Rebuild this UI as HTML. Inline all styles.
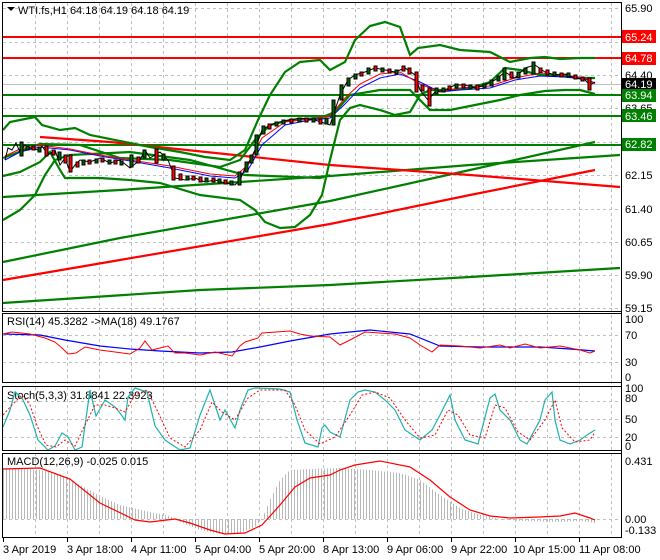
<!DOCTYPE html>
<html><head><meta charset="utf-8"><style>
html,body{margin:0;padding:0;background:#fff;}
svg{display:block;font-family:"Liberation Sans",sans-serif;}
</style></head><body>
<svg width="660" height="560" viewBox="0 0 660 560" xmlns="http://www.w3.org/2000/svg">
<defs>
<pattern id="hist" width="3" height="10" patternUnits="userSpaceOnUse"><rect x="0" y="0" width="1" height="10" fill="#b8b8b8"/></pattern>
</defs>
<rect width="660" height="560" fill="#fff"/>
<g stroke="#c0c0c0" stroke-dasharray="3,3" stroke-width="1">
<path d="M35.5 3V538M67.5 3V538M99.5 3V538M131.5 3V538M163.5 3V538M195.5 3V538M227.5 3V538M259.5 3V538M291.5 3V538M323.5 3V538M355.5 3V538M387.5 3V538M419.5 3V538M451.5 3V538M483.5 3V538M515.5 3V538M547.5 3V538M579.5 3V538M611.5 3V538"/>
<path d="M3 8.5H621M3 42.5H621M3 75.5H621M3 108.5H621M3 142.5H621M3 175.5H621M3 209.5H621M3 242.5H621M3 275.5H621M3 308.5H621"/>
<path d="M3 335.5H621M3 362.5H621M3 401.5H621M3 419.5H621M3 437.5H621M3 519.5H621"/>
</g>
<line x1="3" y1="84.5" x2="621" y2="84.5" stroke="#c0c0c0"/>
<g stroke-width="2" fill="none">
<path d="M3 37H621M3 58H621" stroke="#ff0000"/>
<path d="M3 95H621M3 116H621M3 145H621" stroke="#008000"/>
</g>
<g fill="none" stroke-width="2.2">
<polyline stroke="#008000" points="3,197 120,190 330,176 470,165 620,155"/>
<polyline stroke="#008000" points="3,262 120,238 330,201 470,170 595,142"/>
<polyline stroke="#008000" points="3,303 200,290 330,285 470,277 620,268"/>
<polyline stroke="#ff0000" points="3,280 120,260 330,224 470,195 595,170"/>
<polyline stroke="#ff0000" points="40,137 40,137 110,142 330,165 470,175 620,187"/>
<polyline stroke="#008000" points="3,220 20,210 35,195 45,175 55,160 70,155 130,152 190,160 245,175 320,178 330,175"/>
<polyline stroke="#008000" points="3,130 10,122 35,117 42,125 60,130 75,128 90,135 130,143 150,147 180,152 205,157 230,160 245,150 258,120 270,95 285,72 300,62 320,60 330,70 345,62 355,40 370,26 385,22 400,27 410,55 418,48 440,45 460,50 490,52 510,62 530,58 545,57 560,59 580,58 595,58"/>
<polyline stroke="#008000" points="3,176 20,172 40,162 50,152 60,170 65,178 100,178 130,180 160,183 200,195 240,200 255,210 265,222 280,228 295,227 310,215 322,195 330,160 340,120 350,108 360,105 380,110 395,115 410,112 420,95 430,90 450,90 470,88 490,82 505,68 520,70 540,75 560,76 580,78 595,78"/>
<polyline stroke="#008000" points="3,158 40,144 80,145 120,158 170,160 220,167 240,160 255,140 270,125 290,120 320,118 335,112 350,95 380,90 410,90 430,110 450,110 480,104 500,100 520,95 545,91 565,90 580,90 595,94"/>
</g>
<polyline fill="none" stroke="#0000ff" stroke-width="1" points="5,160 20,152 40,147 70,150 100,156 130,161 170,168 210,176 235,178 248,170 262,145 285,125 310,120 330,118 345,104 360,88 380,78 400,74 420,82 440,92 460,90 490,88 515,80 540,76 565,77 585,79 595,83"/>
<polyline fill="none" stroke="#ff0000" stroke-width="1" points="5,156 20,149 40,145 70,149 100,155 130,160 170,166 210,174 235,176 248,165 262,138 285,122 310,119 330,116 345,98 360,84 380,74 400,72 420,84 440,92 460,88 490,86 515,78 540,73 565,75 585,78 595,84"/>
<polyline fill="none" stroke="#000" stroke-width="1" points="5,160 8,148 12,150 16,143 20,152 25,145 30,148 38,150 42,146 48,155 55,150 60,165 65,158 70,172 75,165 80,160 90,162 100,158 110,163 120,160 130,168 140,160 145,150 150,158 160,152 168,160 175,178 185,180 195,178 205,182 215,180 225,183 235,185 240,180 245,168 250,160 255,150 262,130 270,125 280,122 290,120 300,118 315,120 330,125 335,110 340,95 348,80 355,75 365,72 375,68 385,70 395,72 405,68 415,75 420,90 428,100 435,92 445,90 455,85 465,85 475,88 485,85 495,80 505,72 515,78 525,68 535,65 545,72 555,75 565,74 575,78 585,80 590,85 595,82"/>
<g stroke="#000" stroke-width="1">
<rect x="20" y="142" width="3" height="14" fill="#006400"/><rect x="26" y="146" width="3" height="4" fill="#006400"/><rect x="32" y="146" width="3" height="4" fill="#ff0000"/><rect x="38" y="147" width="3" height="5" fill="#006400"/>
<rect x="45" y="146" width="3" height="10" fill="#ff0000"/><rect x="52" y="150" width="3" height="5" fill="#ff0000"/><rect x="58" y="152" width="3" height="8" fill="#006400"/><rect x="64" y="155" width="3" height="8" fill="#ff0000"/>
<rect x="69" y="155" width="3" height="17" fill="#ff0000"/><rect x="76" y="162" width="3" height="5" fill="#ff0000"/><rect x="82" y="160" width="3" height="5" fill="#006400"/><rect x="88" y="160" width="3" height="4" fill="#ff0000"/>
<rect x="95" y="159" width="3" height="4" fill="#006400"/><rect x="101" y="158" width="3" height="4" fill="#ff0000"/><rect x="108" y="160" width="3" height="4" fill="#006400"/><rect x="114" y="160" width="3" height="4" fill="#ff0000"/>
<rect x="120" y="161" width="3" height="4" fill="#006400"/><rect x="130" y="155" width="3" height="12" fill="#006400"/><rect x="137" y="157" width="3" height="6" fill="#ff0000"/><rect x="143" y="150" width="3" height="8" fill="#006400"/>
<rect x="155" y="149" width="3" height="14" fill="#ff0000"/><rect x="162" y="154" width="3" height="6" fill="#006400"/><rect x="172" y="166" width="3" height="14" fill="#ff0000"/><rect x="179" y="174" width="3" height="6" fill="#ff0000"/>
<rect x="186" y="176" width="3" height="4" fill="#006400"/><rect x="192" y="176" width="3" height="4" fill="#ff0000"/><rect x="199" y="177" width="3" height="5" fill="#ff0000"/><rect x="205" y="178" width="3" height="4" fill="#006400"/>
<rect x="212" y="178" width="3" height="4" fill="#ff0000"/><rect x="218" y="179" width="3" height="4" fill="#006400"/><rect x="224" y="180" width="3" height="4" fill="#ff0000"/><rect x="230" y="181" width="3" height="4" fill="#006400"/>
<rect x="238" y="172" width="3" height="13" fill="#006400"/><rect x="245" y="162" width="3" height="10" fill="#006400"/><rect x="250" y="155" width="3" height="8" fill="#006400"/><rect x="255" y="135" width="3" height="20" fill="#006400"/>
<rect x="262" y="126" width="3" height="8" fill="#006400"/><rect x="268" y="124" width="3" height="5" fill="#ff0000"/><rect x="275" y="122" width="3" height="4" fill="#006400"/><rect x="282" y="120" width="3" height="4" fill="#006400"/>
<rect x="290" y="119" width="3" height="4" fill="#ff0000"/><rect x="298" y="118" width="3" height="4" fill="#006400"/><rect x="305" y="118" width="3" height="4" fill="#ff0000"/><rect x="312" y="118" width="3" height="4" fill="#006400"/>
<rect x="319" y="119" width="3" height="5" fill="#ff0000"/><rect x="325" y="118" width="3" height="6" fill="#006400"/>
<rect x="332" y="100" width="3" height="25" fill="#006400"/><rect x="340" y="85" width="3" height="15" fill="#006400"/><rect x="347" y="78" width="3" height="8" fill="#006400"/><rect x="354" y="74" width="3" height="5" fill="#006400"/>
<rect x="360" y="72" width="3" height="4" fill="#ff0000"/><rect x="367" y="68" width="3" height="6" fill="#006400"/><rect x="374" y="66" width="3" height="5" fill="#ff0000"/><rect x="381" y="68" width="3" height="4" fill="#006400"/>
<rect x="388" y="69" width="3" height="4" fill="#ff0000"/><rect x="395" y="70" width="3" height="4" fill="#006400"/><rect x="402" y="66" width="3" height="5" fill="#ff0000"/><rect x="408" y="68" width="3" height="6" fill="#ff0000"/>
<rect x="415" y="72" width="3" height="20" fill="#ff0000"/><rect x="421" y="85" width="3" height="6" fill="#ff0000"/><rect x="428" y="88" width="3" height="18" fill="#ff0000"/><rect x="435" y="88" width="3" height="6" fill="#006400"/>
<rect x="442" y="88" width="3" height="4" fill="#006400"/><rect x="448" y="86" width="3" height="4" fill="#ff0000"/><rect x="455" y="84" width="3" height="4" fill="#006400"/><rect x="462" y="84" width="3" height="4" fill="#ff0000"/>
<rect x="469" y="85" width="3" height="4" fill="#006400"/><rect x="476" y="85" width="3" height="5" fill="#ff0000"/><rect x="483" y="84" width="3" height="4" fill="#006400"/><rect x="490" y="80" width="3" height="6" fill="#006400"/>
<rect x="497" y="76" width="3" height="5" fill="#006400"/><rect x="503" y="68" width="3" height="12" fill="#006400"/><rect x="510" y="72" width="3" height="6" fill="#ff0000"/><rect x="517" y="72" width="3" height="6" fill="#006400"/>
<rect x="524" y="68" width="3" height="6" fill="#006400"/><rect x="532" y="62" width="3" height="12" fill="#006400"/><rect x="539" y="68" width="3" height="5" fill="#ff0000"/><rect x="546" y="70" width="3" height="5" fill="#ff0000"/>
<rect x="553" y="72" width="3" height="4" fill="#006400"/><rect x="560" y="73" width="3" height="4" fill="#ff0000"/><rect x="567" y="73" width="3" height="4" fill="#006400"/><rect x="574" y="75" width="3" height="4" fill="#ff0000"/>
<rect x="581" y="77" width="3" height="4" fill="#ff0000"/><rect x="588" y="78" width="3" height="12" fill="#ff0000"/>
</g>
<g font-size="11" fill="#000">
<text x="625" y="12">65.90</text><text x="625" y="79">64.40</text><text x="625" y="112">63.65</text>
<text x="625" y="179">62.15</text><text x="625" y="213">61.40</text><text x="625" y="246">60.65</text>
<text x="625" y="279">59.90</text><text x="625" y="312">59.15</text>
</g>
<rect x="622" y="30" width="34" height="13" fill="#ff0000"/><text x="625" y="41" font-size="11" fill="#fff">65.24</text>
<rect x="622" y="52" width="34" height="13" fill="#ff0000"/><text x="625" y="62" font-size="11" fill="#fff">64.78</text>
<rect x="622" y="78" width="34" height="12" fill="#000"/><text x="625" y="88" font-size="11" fill="#fff">64.19</text>
<rect x="622" y="89" width="34" height="13" fill="#008000"/><text x="625" y="99" font-size="11" fill="#fff">63.94</text>
<rect x="622" y="109" width="34" height="13" fill="#008000"/><text x="625" y="120" font-size="11" fill="#fff">63.46</text>
<rect x="622" y="138" width="34" height="13" fill="#008000"/><text x="625" y="148" font-size="11" fill="#fff">62.82</text>
<path d="M7 7h8l-4 4z" fill="#000"/>
<text x="18" y="14" font-size="11" fill="#000">WTI.fs,H1  64.18 64.19 64.18 64.19</text>
<text x="7" y="325" font-size="11">RSI(14) 45.3282  -&gt;MA(18) 49.1767</text>
<polyline fill="none" stroke="#0000ff" stroke-width="1.2" points="3,334 40,335 65,340 100,346 130,349 160,351 200,353 232,352 260,347 290,341 330,334 370,330 410,334 440,346 480,347 540,347 570,349 595,351"/>
<polyline fill="none" stroke="#ff0000" stroke-width="1" points="3,334 12,332 30,334 45,338 55,342 62,348 68,354 76,353 85,347 100,350 115,352 130,354 140,348 145,341 152,350 160,348 168,346 175,353 185,353 200,355 215,352 232,356 240,346 245,342 258,338 262,333 290,331 300,334 310,336 330,337 340,345 350,340 365,332 380,333 395,334 410,338 420,345 432,352 440,345 460,346 480,348 500,345 510,348 525,344 540,348 560,346 580,350 590,353 595,351"/>
<text x="7" y="399" font-size="11">Stoch(5,3,3) 31.8841 22.3923</text>
<polyline fill="none" stroke="#20b2aa" stroke-width="1.2" points="3,427 10,410 15,392 22,398 30,415 38,440 48,450 55,446 62,433 68,437 75,450 82,447 90,390 96,416 105,400 115,407 120,413 125,420 128,397 135,388 147,392 155,426 165,440 180,450 190,448 200,415 210,390 220,420 225,410 235,428 240,410 248,390 255,388 280,389 290,392 297,420 305,443 318,447 322,428 325,425 330,432 340,437 350,400 358,392 365,390 375,392 385,400 395,410 405,430 420,440 432,430 440,415 450,395 455,420 465,440 478,444 490,398 495,394 500,410 510,420 520,440 527,444 540,420 545,400 552,392 555,420 560,440 570,444 580,440 587,435 595,430"/>
<polyline fill="none" stroke="#ff0000" stroke-width="1" stroke-dasharray="2,2" points="3,415 12,405 22,395 30,405 38,428 46,445 56,447 65,440 75,446 85,425 95,405 105,405 115,408 125,412 135,395 147,390 157,410 170,438 185,447 200,430 212,402 222,412 235,420 248,398 260,390 285,390 295,405 305,430 320,444 335,437 350,415 362,395 375,392 390,398 405,420 420,438 435,435 448,410 458,415 470,435 485,438 495,405 505,408 518,432 530,440 545,420 555,400 562,428 575,442 590,440 595,432"/>
<text x="7" y="465" font-size="11">MACD(12,26,9) -0.025 0.015</text>
<polygon fill="url(#hist)" points="3,519 3,468 40,470 60,474 80,485 100,496 120,505 150,512 170,516 175,519 185,524 200,530 220,534 240,533 255,527 262,519 270,500 280,480 290,470 310,469 340,468 370,470 400,473 420,480 440,495 460,508 480,515 500,519 520,521 560,522 580,521 595,523 595,519"/>
<polyline fill="none" stroke="#ff0000" stroke-width="1.2" points="3,469 40,468 70,479 100,503 135,520 150,522 175,519 190,523 210,530 225,534 245,533 262,525 280,505 295,487 310,478 330,475 340,470 355,465 380,461 410,467 430,480 450,497 470,510 490,516 510,518 540,517 560,516 575,513 590,518 595,520"/>
<g font-size="11">
<text x="625" y="323">100</text><text x="625" y="339">70</text><text x="625" y="366">30</text><text x="625" y="381">0</text>
<text x="625" y="392">100</text><text x="625" y="402">80</text><text x="625" y="423">50</text><text x="625" y="441">20</text><text x="625" y="450">0</text>
<text x="625" y="465">0.431</text><text x="625" y="523">0.00</text><text x="625" y="534">-0.133</text>
</g>
<g fill="none" stroke="#000" stroke-width="1">
<rect x="2.5" y="2.5" width="619" height="309"/>
<rect x="2.5" y="313.5" width="619" height="69"/>
<rect x="2.5" y="386.5" width="619" height="64"/>
<rect x="2.5" y="453.5" width="619" height="84"/>
</g>
<g stroke="#000"><path d="M3.5 538v4M67.5 538v4M131.5 538v4M195.5 538v4M259.5 538v4M323.5 538v4M387.5 538v4M451.5 538v4M515.5 538v4M579.5 538v4M621.5 311v4M621.5 383v4M621.5 450v4"/></g>
<g font-size="11">
<text x="3" y="553">3 Apr 2019</text><text x="67" y="553">3 Apr 18:00</text><text x="131" y="553">4 Apr 11:00</text>
<text x="195" y="553">5 Apr 04:00</text><text x="259" y="553">5 Apr 20:00</text><text x="323" y="553">8 Apr 13:00</text>
<text x="387" y="553">9 Apr 06:00</text><text x="451" y="553">9 Apr 22:00</text><text x="513" y="553">10 Apr 15:00</text>
<text x="579" y="553">11 Apr 08:00</text>
</g>
</svg>
</body></html>
